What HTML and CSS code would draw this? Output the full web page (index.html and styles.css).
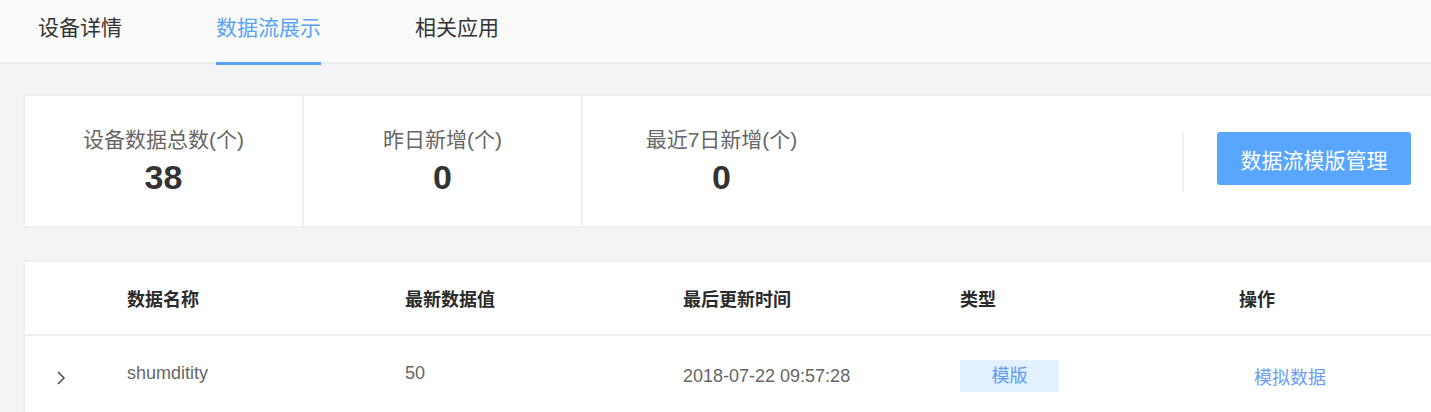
FILE: index.html
```html
<!DOCTYPE html>
<html lang="zh-CN">
<head>
<meta charset="utf-8">
<title>数据流展示</title>
<link rel="stylesheet" href="styles.css">
</head>
<body>
<nav class="tabs">
  <a class="tab">设备详情</a>
  <a class="tab active">数据流展示</a>
  <a class="tab">相关应用</a>
</nav>

<section class="stats">
  <div class="stat">
    <div class="stat-label">设备数据总数(个)</div>
    <div class="stat-value">38</div>
  </div>
  <div class="stat">
    <div class="stat-label">昨日新增(个)</div>
    <div class="stat-value">0</div>
  </div>
  <div class="stat stat-last">
    <div class="stat-label">最近7日新增(个)</div>
    <div class="stat-value">0</div>
  </div>
  <div class="stats-spacer"></div>
  <div class="stats-actions">
    <button class="btn-primary">数据流模版管理</button>
  </div>
</section>

<section class="table">
  <div class="row head">
    <div class="cell"></div>
    <div class="cell">数据名称</div>
    <div class="cell">最新数据值</div>
    <div class="cell">最后更新时间</div>
    <div class="cell">类型</div>
    <div class="cell">操作</div>
  </div>
  <div class="row body-row">
    <div class="cell expand">
      <svg width="10" height="16" viewBox="0 0 10 16"><polyline points="2,2 8,8 2,14" fill="none" stroke="#4a4f5a" stroke-width="1.6"/></svg>
    </div>
    <div class="cell name">shumditity</div>
    <div class="cell value">50</div>
    <div class="cell time">2018-07-22 09:57:28</div>
    <div class="cell"><span class="tag">模版</span></div>
    <div class="cell"><a class="link">模拟数据</a></div>
  </div>
</section>
</body>
</html>
```
FILE: styles.css
```css
html, body {
  margin: 0;
  padding: 0;
  overflow: hidden;
}
body {
  background: #f3f4f6;
  font-family: "Liberation Sans", "Noto Sans CJK SC", sans-serif;
  color: #333;
}

.tabs {
  display: flex;
  gap: 94px;
  height: 62px;
  padding-left: 38px;
  background: #fafafa;
  border-bottom: 2px solid #ececec;
}
.tab {
  position: relative;
  font-size: 21px;
  line-height: 56px;
  color: #333;
  cursor: pointer;
}
.tab.active {
  color: #58a3f8;
}
.tab.active::after {
  content: "";
  position: absolute;
  left: 0;
  right: 0;
  bottom: -3px;
  height: 3px;
  background: #58a3f8;
}

.stats {
  display: flex;
  margin: 30px 0 0 23px;
  height: 130px;
  background: #fff;
  border: 2px solid #eceef1;
  border-right: none;
}
.stat {
  width: 279px;
  border-right: 2px solid #eceef1;
  display: flex;
  flex-direction: column;
  align-items: center;
  padding-top: 31px;
  box-sizing: border-box;
}
.stat-last {
  width: 277px;
  border-right: none;
}
.stat-label {
  font-size: 21px;
  line-height: 26px;
  color: #666;
}
.stat-value {
  font-size: 34px;
  font-weight: bold;
  line-height: 48px;
  color: #333;
}
.stats-spacer {
  flex: 1;
}
.stats-actions {
  margin-top: 36px;
  height: 60px;
  border-left: 2px solid #f1f1f1;
  padding: 0 20px 0 33px;
}
.btn-primary {
  width: 194px;
  height: 53px;
  border: none;
  border-radius: 3px;
  background: #58a6ff;
  color: #fff;
  font-family: inherit;
  font-size: 21px;
  cursor: pointer;
}

.table {
  margin: 32px 0 0 23px;
  background: #fff;
  border: 2px solid #eceef1;
  border-right: none;
}
.row {
  display: grid;
  grid-template-columns: 102px 278px 278px 277px 279px 1fr;
  align-items: center;
}
.head {
  height: 72px;
  border-bottom: 2px solid #eceef1;
  font-size: 18px;
  font-weight: bold;
  color: #2b2b2b;
}
.body-row {
  height: 80px;
  font-size: 18px;
  color: #666;
}
.expand {
  display: flex;
  justify-content: flex-start;
  padding-left: 31px;
  padding-top: 4px;
}
.name, .value {
  margin-top: -6px;
}
.tag {
  display: inline-block;
  width: 99px;
  height: 32px;
  line-height: 32px;
  text-align: center;
  background: #e3f0ff;
  color: #5c9df3;
}
.link {
  padding-left: 15px;
  color: #6b9ef4;
  cursor: pointer;
}
```
